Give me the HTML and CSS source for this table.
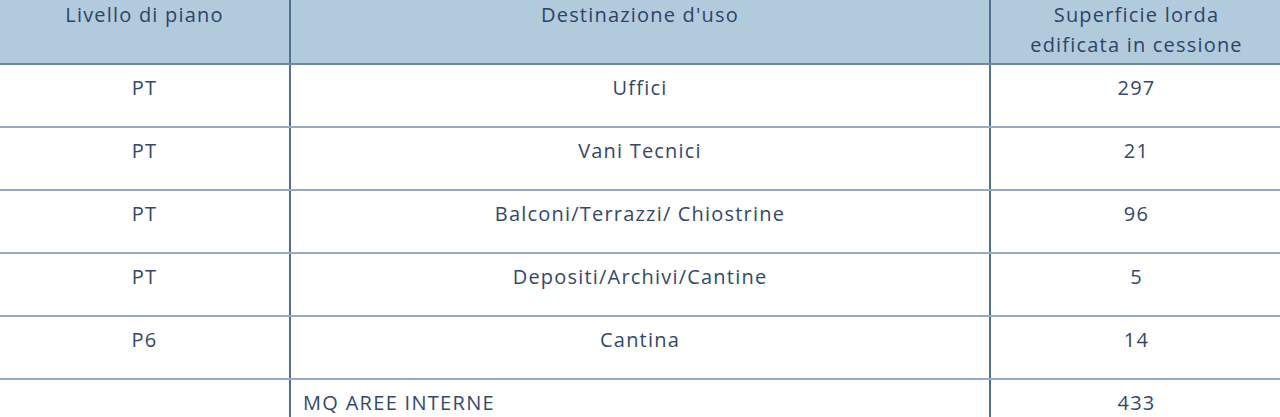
FILE: index.html
```html
<!DOCTYPE html>
<html lang="it">
<head>
<meta charset="utf-8">
<title>Superfici</title>
<link rel="stylesheet" href="styles.css">
</head>
<body>
<table class="tbl">
  <colgroup>
    <col class="c1">
    <col class="c2">
    <col class="c3">
  </colgroup>
  <thead>
    <tr>
      <th>Livello di piano</th>
      <th>Destinazione d'uso</th>
      <th>Superficie lorda<br>edificata in cessione</th>
    </tr>
  </thead>
  <tbody>
    <tr><td>PT</td><td>Uffici</td><td>297</td></tr>
    <tr><td>PT</td><td>Vani Tecnici</td><td>21</td></tr>
    <tr><td>PT</td><td>Balconi/Terrazzi/ Chiostrine</td><td>96</td></tr>
    <tr><td>PT</td><td>Depositi/Archivi/Cantine</td><td>5</td></tr>
    <tr><td>P6</td><td>Cantina</td><td>14</td></tr>
    <tr class="total"><td></td><td class="label">MQ AREE INTERNE</td><td>433</td></tr>
  </tbody>
</table>
</body>
</html>
```

FILE: styles.css
```css
html, body {
  margin: 0;
  padding: 0;
  background: #ffffff;
  overflow: hidden;
}
.tbl {
  width: 1282px;
  border-collapse: collapse;
  table-layout: fixed;
  font-family: "Open Sans", "Liberation Sans", sans-serif;
  font-size: 20px;
  font-weight: 500;
  letter-spacing: 1.2px;
  color: #34486a;
}
.c1 { width: 290px; }
.c2 { width: 700px; }
.c3 { width: 292px; }
.tbl th {
  background: #b1cbdc;
  font-weight: 500;
  color: #2d4468;
  height: 63px;
  padding: 0;
  line-height: 30px;
  vertical-align: top;
  text-align: center;
  border-left: 2px solid #54708f;
  border-bottom: 2px solid #6f87a3;
}
.tbl td {
  height: 49px;
  padding: 12px 0 0;
  line-height: 22px;
  vertical-align: top;
  text-align: center;
  border-left: 2px solid #54708f;
  border-bottom: 2px solid #97abc0;
}
.tbl th:first-child,
.tbl td:first-child { border-left: none; }
.total td.label {
  text-align: left;
  padding-left: 12px;
  text-transform: uppercase;
  letter-spacing: 1.3px;
}
```
